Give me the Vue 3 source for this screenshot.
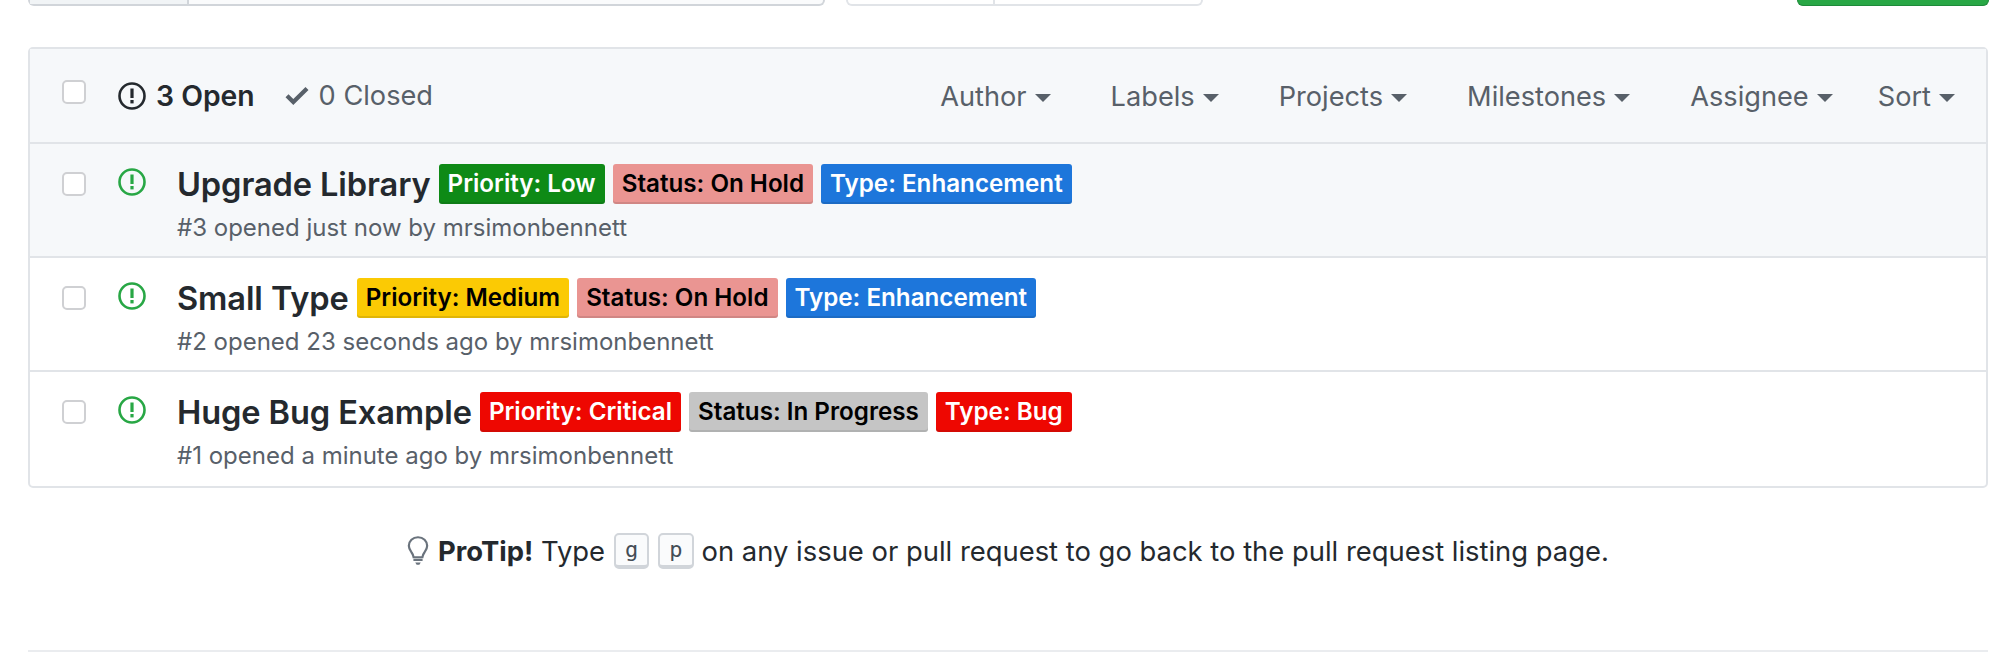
<script setup>
const filters = ['Author', 'Labels', 'Projects', 'Milestones', 'Assignee', 'Sort']
const issues = [
  { title: 'Upgrade Library', meta: '#3 opened just now by mrsimonbennett', tint: true, labels: [
    { t: 'Priority: Low', c: 'green' }, { t: 'Status: On Hold', c: 'pink' }, { t: 'Type: Enhancement', c: 'blue' } ] },
  { title: 'Small Type', meta: '#2 opened 23 seconds ago by mrsimonbennett', labels: [
    { t: 'Priority: Medium', c: 'yellow' }, { t: 'Status: On Hold', c: 'pink' }, { t: 'Type: Enhancement', c: 'blue' } ] },
  { title: 'Huge Bug Example', meta: '#1 opened a minute ago by mrsimonbennett', labels: [
    { t: 'Priority: Critical', c: 'red' }, { t: 'Status: In Progress', c: 'grey' }, { t: 'Type: Bug', c: 'red' } ] }
]
</script>

<template>
  <div class="page">
    <div class="topbar">
      <div class="search"><div class="filter"></div></div>
      <div class="tabs"><div class="tab"></div></div>
      <div class="newbtn"></div>
    </div>

    <div class="box">
      <div class="head">
        <span class="check"></span>
        <div class="states">
          <svg class="ic dark" viewBox="0 0 28 28" width="28" height="28"><circle cx="14" cy="14" r="12.5" fill="none" stroke="currentColor" stroke-width="2.6"/><rect x="12.4" y="6.5" width="3.2" height="9.5" fill="currentColor"/><rect x="12.4" y="18" width="3.2" height="3.4" fill="currentColor"/></svg>
          <span class="open">3 Open</span>
          <svg class="tick" viewBox="0 0 24 20" width="24" height="20"><path d="M8.3 19 0.5 11.2l3-3 4.8 4.8L20.500 1l3 3z" fill="currentColor"/></svg>
          <span class="closed">0 Closed</span>
        </div>
        <div class="filters">
          <span v-for="f in filters" :key="f" class="fl">{{ f }}<i class="caret"></i></span>
        </div>
      </div>
      <div v-for="i in issues" :key="i.title" class="row" :class="{ tint: i.tint }">
        <span class="check"></span>
        <svg class="ic green" viewBox="0 0 28 28" width="28" height="28"><circle cx="14" cy="14" r="12.5" fill="none" stroke="currentColor" stroke-width="2.6"/><rect x="12.4" y="6.5" width="3.2" height="9.5" fill="currentColor"/><rect x="12.4" y="18" width="3.2" height="3.4" fill="currentColor"/></svg>
        <div class="body">
          <div class="line">
            <span class="title">{{ i.title }}</span>
            <span v-for="l in i.labels" :key="l.t" class="label" :class="l.c">{{ l.t }}</span>
          </div>
          <div class="meta">{{ i.meta }}</div>
        </div>
      </div>
    </div>

    <div class="tip">
      <svg class="bulb" viewBox="0 0 24 34" width="22" height="32"><path d="M12 2C6.200 2 2 6.200 2 11.400c0 3.400 1.500 5.200 3 7.200 1.200 1.600 2 3 2.200 5.200h9.600c.2-2.200 1-3.600 2.200-5.200 1.500-2 3-3.800 3-7.200C22 6.200 17.800 2 12 2z" fill="none" stroke="#6a737d" stroke-width="2.400"/><path d="M7 25.500h10v2.500H7zM9 29.500h6l-1.500 2.500h-3z" fill="#6a737d"/></svg>
      <b>ProTip!</b>&nbsp;Type<kbd class="k1">g</kbd><kbd class="k2">p</kbd>on any issue or pull request to go back to the pull request listing page.
    </div>

    <div class="rule"></div>
  </div>
</template>

<style>
html, body { margin: 0; background: #fff; }
</style>

<style scoped>
.page { width: 2016px; height: 658px; overflow: hidden; font-family: Inter, "Liberation Sans", sans-serif; color: #24292e; }
.topbar { height: 6px; padding: 0 27px 0 28px; display: flex; box-sizing: border-box; }
.search { width: 797px; height: 6px; box-sizing: border-box; background: #fafbfc; border: 2px solid #d1d5da; border-top: 0; border-radius: 0 0 6px 6px; }
.filter { width: 159px; height: 4px; background: #f1f4f6; border-right: 2px solid #d1d5da; box-sizing: border-box; }
.tabs { margin-left: 21px; width: 357px; height: 6px; box-sizing: border-box; border: 2px solid #e1e4e8; border-top: 0; border-radius: 0 0 6px 6px; }
.tab { width: 147px; height: 4px; border-right: 2px solid #e1e4e8; box-sizing: border-box; }
.newbtn { margin-left: auto; width: 192px; height: 6px; background: #28a745; border: 1px solid #1e8a3a; border-top: 0; border-radius: 0 0 7px 7px; box-sizing: border-box; }

.box { margin: 41px 28px 0 28px; width: 1960px; box-sizing: border-box; border: 2px solid #e1e4e8; border-radius: 5px; }
.head { height: 93px; display: flex; align-items: center; background: #f6f8fa; border-bottom: 2px solid #e1e4e8; padding-left: 32px; padding-right: 31px; box-sizing: content-box; }
.check { display: block; flex: none; width: 24px; height: 24px; box-sizing: border-box; background: #fff; border: 2px solid #cfd0d3; border-radius: 5px; }
.head .check { margin-top: -7px; }
.states { display: flex; align-items: center; margin-left: 32px; font-size: 27.2px; }
.ic { flex: none; display: block; }
.dark { color: #24292e; }
.green { color: #28a745; }
.open { font-size: 28.3px; font-weight: 600; margin-left: 10px; }
.tick { color: #586069; margin-left: 30px; }
.closed { color: #586069; margin-left: 10px; }
.filters { margin-left: auto; padding-top: 1px; display: flex; gap: 60px; font-size: 27.2px; color: #586069; }
.fl { display: inline-flex; align-items: center; }
.fl:last-child { margin-left: -15px; }
.caret { width: 0; height: 0; margin-left: 8px; margin-top: 3px; border: 8px solid transparent; border-top: 8px solid #586069; border-bottom: 0; }

.row { display: flex; height: 112px; box-sizing: content-box; padding-left: 32px; border-bottom: 2px solid #e1e4e8; }
.row:last-child { border-bottom: 0; height: 114px; }
.tint { background: #f6f8fa; }
.row .check { margin-top: 28px; }
.row .ic { margin-top: 24px; margin-left: 32px; }
.body { margin-left: 31px; padding-top: 20px; }
.line { display: flex; align-items: flex-start; gap: 8px; height: 40px; }
.title { font-size: 32.6px; font-weight: 600; line-height: 40px; letter-spacing: -0.1px; }
.label { height: 40px; line-height: 40px; padding: 0 9px; box-sizing: border-box; font-size: 24.2px; font-weight: 600; border-radius: 3px; box-shadow: inset 0 -2px 0 rgba(27,31,35,.12); }
.green.label { background: #0e8a16; color: #fff; }
.pink { background: #ea9592; color: #000; }
.blue { background: #1d76db; color: #fff; }
.yellow { background: #fbca04; color: #000; }
.red { background: #ee0701; color: #fff; }
.grey { background: #c5c5c5; color: #000; }
.meta { margin-top: 9px; font-size: 24px; line-height: 30px; color: #586069; }

.tip { margin-top: 43px; display: flex; justify-content: center; align-items: center; font-size: 27.4px; line-height: 38px; height: 40px; }
.bulb { margin-right: 9px; }
kbd { display: block; flex: none; box-sizing: border-box; height: 36px; padding: 0 9px; font: 22px/30px "DejaVu Sans Mono", monospace; color: #444d56; background: #fafbfc; border: 2px solid #d1d5da; border-bottom-width: 4px; border-radius: 5px; }
.k1 { margin-left: 9px; }
.k2 { margin-left: 9px; margin-right: 8px; }
.rule { margin: 79px 28px 0; height: 2px; background: #eaecef; }
</style>
